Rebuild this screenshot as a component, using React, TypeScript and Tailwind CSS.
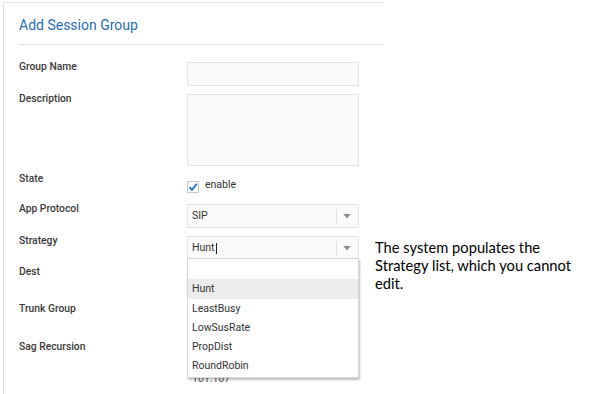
import React from "react";

const labelCls =
  "w-[168px] shrink-0 text-[10.3px] leading-[14px] font-medium text-[#3a3a3a] mt-[-2px]";

function Caret() {
  return (
    <div className="flex items-center h-full">
      <div className="w-px h-[15px] bg-[#e2e2e2]" />
      <svg width="21" height="8" viewBox="0 0 21 8" className="shrink-0">
        <path d="M6.5 2 L13.5 2 L10 6.5 Z" fill="#8a8a8a" />
      </svg>
    </div>
  );
}

function Select({ value, cursor }: { value: string; cursor?: boolean }) {
  return (
    <div className="w-[172px] h-[24px] border border-[#e3e3e3] bg-[#fafafa] rounded-[1px] flex items-center justify-between pl-[4px]">
      <span className="text-[10.5px] text-[#333] flex items-center">
        {value}
        {cursor && <span className="inline-block w-px h-[11px] bg-[#222] ml-[1px]" />}
      </span>
      <Caret />
    </div>
  );
}

export default function App() {
  const items = ["LeastBusy", "LowSusRate", "PropDist", "RoundRobin"];
  return (
    <div
      className="w-[602px] h-[394px] bg-white relative overflow-hidden"
      style={{ fontFamily: 'Roboto, "Noto Sans", sans-serif' }}
    >
      <div className="ml-[3px] mt-[2px] w-[380px] h-[392px] border-t border-l border-[#e0e0e0] pl-[15px]">
        <div className="pt-[12px] h-[41px] text-[14px] leading-[20px] text-[#2a6cb7]">
          Add Session Group
        </div>
        <div className="h-px bg-[#dcdfe3] w-[365px]" />
        <div className="mt-[17px] flex flex-col">
          <div className="flex items-start h-[32px]">
            <div className={labelCls}>Group Name</div>
            <div className="w-[172px] h-[24px] border border-[#e3e3e3] bg-[#fafafa] rounded-[1px]" />
          </div>
          <div className="flex items-start h-[80px]">
            <div className={labelCls}>Description</div>
            <div className="w-[172px] h-[72px] border border-[#e3e3e3] bg-[#fafafa] rounded-[1px]" />
          </div>
          <div className="flex items-start h-[30px]">
            <div className={labelCls}>State</div>
            <div className="flex items-start mt-[7px]">
              <div className="w-[12px] h-[12px] border border-[#c8c8c8] bg-white flex items-center justify-center">
                <svg width="10" height="10" viewBox="0 0 10 10">
                  <path d="M1.5 5.2 L4 7.8 L8.8 1.8" stroke="#1f6cc0" strokeWidth="1.8" fill="none" />
                </svg>
              </div>
              <span className="ml-[6px] mt-[-3px] text-[10.5px] leading-[14px] text-[#333]">enable</span>
            </div>
          </div>
          <div className="flex items-start h-[32px]">
            <div className={labelCls}>App Protocol</div>
            <Select value="SIP" />
          </div>
          <div className="flex items-start h-[31px]">
            <div className={labelCls}>Strategy</div>
            <Select value="Hunt" cursor />
          </div>
          <div className="flex items-start h-[37px]">
            <div className={labelCls}>Dest</div>
          </div>
          <div className="flex items-start h-[38px]">
            <div className={labelCls}>Trunk Group</div>
          </div>
          <div className="flex items-start h-[38px]">
            <div className={labelCls}>Sag Recursion</div>
          </div>
        </div>
      </div>

      <div className="absolute left-[192px] top-[371px] text-[10.5px] text-[#555]">101.167</div>

      <div className="absolute left-[187px] top-[258px] w-[172px] h-[120px] bg-white border border-[#d6d6d6] shadow-[1px_2px_2px_rgba(0,0,0,0.25)] flex flex-col">
        <div className="h-[20px]" />
        <div className="h-[20px] bg-[#ececec] pl-[4px] text-[10.5px] leading-[20px] text-[#333]">Hunt</div>
        {items.map((t) => (
          <div key={t} className="h-[19px] pl-[4px] text-[10.5px] leading-[19px] text-[#333]">
            {t}
          </div>
        ))}
      </div>

      <div
        className="absolute left-[375px] top-[238px] text-[14.7px] leading-[18px] text-black"
        style={{ fontFamily: 'Lato, "Open Sans", sans-serif' }}
      >
        The system populates the
        <br />
        Strategy list, which you cannot
        <br />
        edit.
      </div>
    </div>
  );
}
